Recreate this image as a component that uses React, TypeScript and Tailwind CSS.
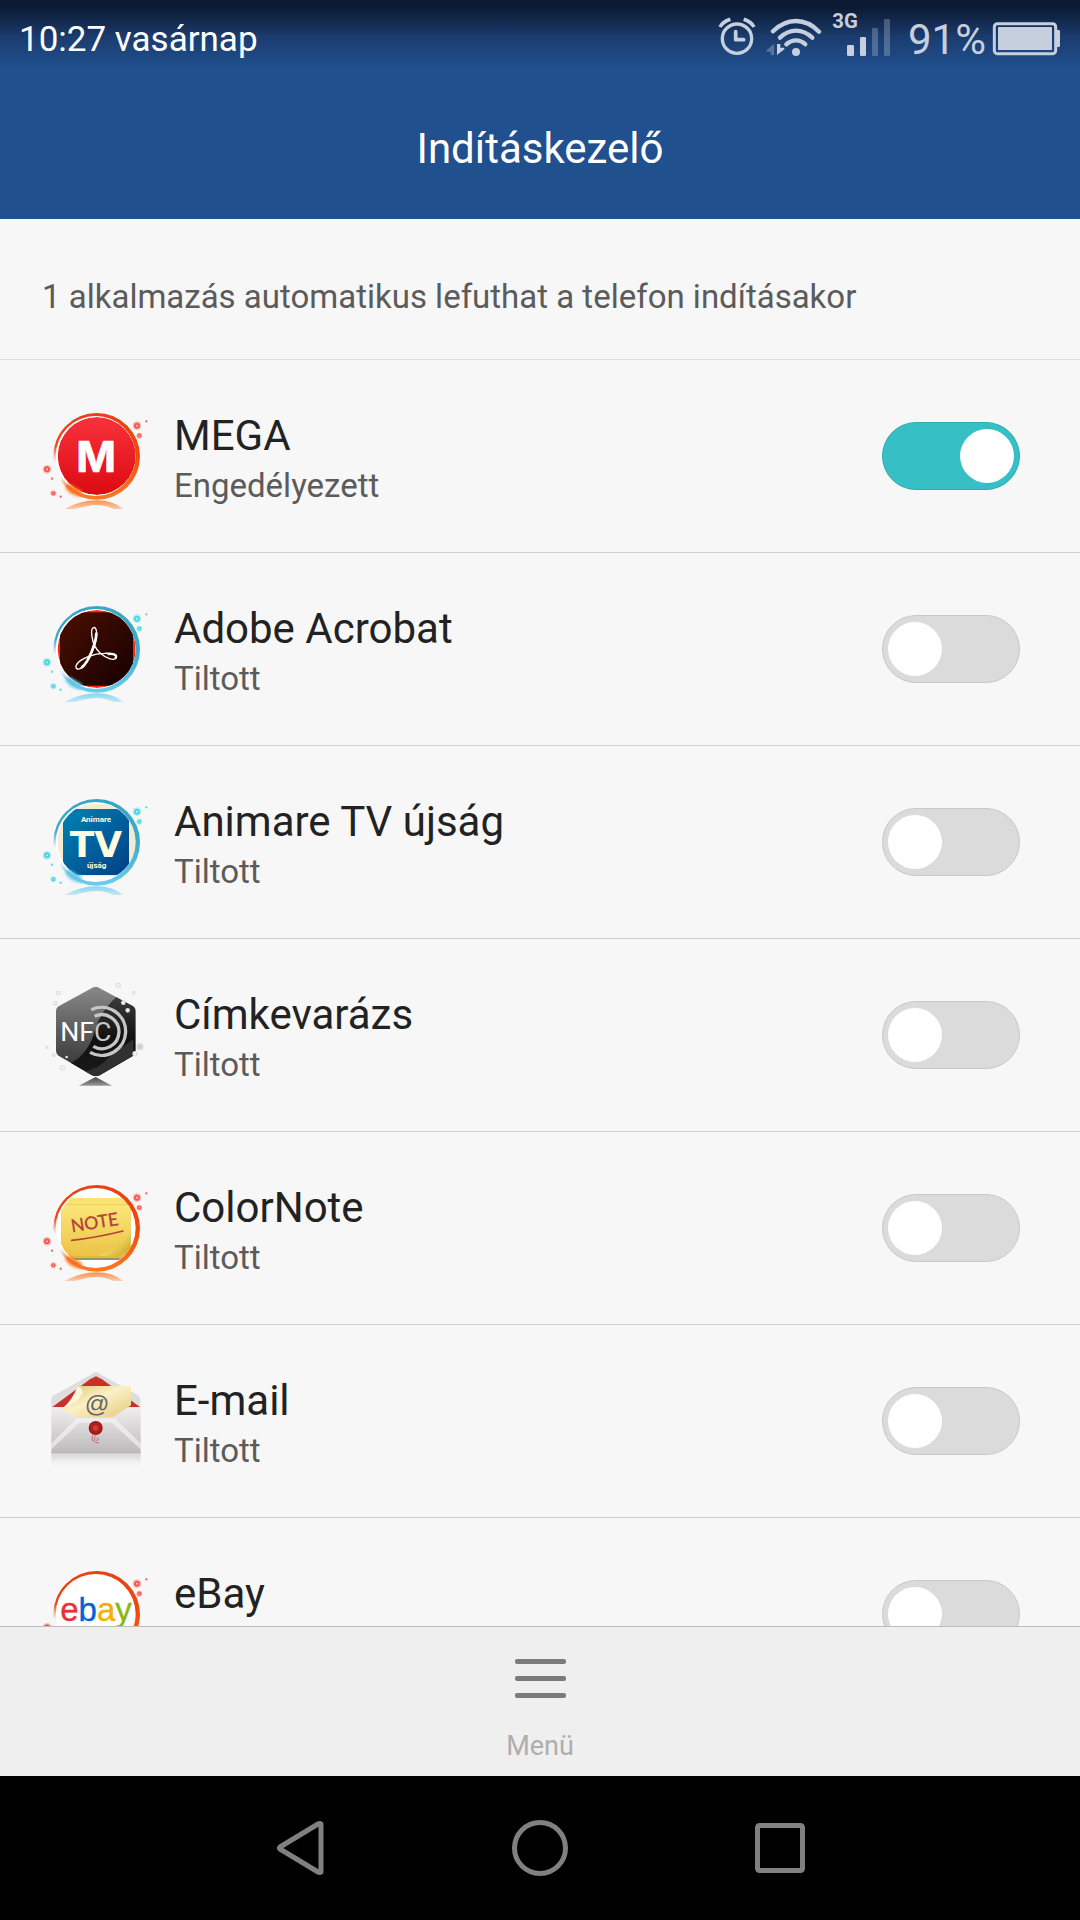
import React, { useState } from 'react';
import { clsx } from 'clsx';

interface AppEntry {
  id: string;
  name: string;
  icon: React.ElementType;
  allowed: boolean;
}

/* ---------- status bar icons ---------- */

const AlarmIcon = () => (
  <svg viewBox="54 30 114 144" className="h-[48px] w-[38px]" fill="none" stroke="currentColor" aria-hidden="true">
    <circle cx="111" cy="116" r="44" strokeWidth="10" />
    <path d="M107 95v24h24" strokeWidth="11" strokeLinecap="round" strokeLinejoin="round" />
    <path d="M60 81Q68 66 91 58" strokeWidth="11" />
    <path d="M162 81Q154 66 131 58" strokeWidth="11" />
  </svg>
);

const WifiIcon = () => (
  <svg viewBox="201 30 168 144" className="h-[48px] w-[56px]" fill="none" stroke="currentColor" aria-hidden="true">
    <g strokeWidth="13" strokeLinecap="round">
      <path d="M222 94Q253 63 291 63T360 95" />
      <path d="M243 113Q265 92 291 92T340 113" />
      <path d="M262 133Q275 121 291 121T319 133" />
    </g>
    <circle cx="291" cy="156" r="12" fill="currentColor" stroke="none" />
    <path d="M225 132v33h-10v-10h-12v-5z" fill="currentColor" stroke="none" opacity=".35" />
    <path d="M234 165v-33h10v11h12v5z" fill="currentColor" stroke="none" />
  </svg>
);

const SignalIcon = () => (
  <svg viewBox="396 30 177 144" className="h-[48px] w-[59px]" fill="currentColor" aria-hidden="true">
    <text x="397" y="84" fontFamily="Roboto, sans-serif" fontSize="61" fontWeight="700">3G</text>
    <rect x="441" y="135" width="21" height="33" rx="4" />
    <rect x="480" y="111" width="18" height="57" rx="4" />
    <rect x="516" y="84" width="18" height="84" rx="4" opacity=".3" />
    <rect x="552" y="57" width="18" height="111" rx="4" opacity=".3" />
  </svg>
);

const BatteryIcon = () => (
  <svg viewBox="876 30 207 144" className="h-[48px] w-[69px]" aria-hidden="true">
    <rect x="883" y="71" width="184" height="90" rx="9" fill="none" stroke="currentColor" strokeWidth="9" />
    <rect x="894" y="81" width="162" height="69" fill="currentColor" />
    <path d="M1071 90h5q4 0 4 4v43q0 4-4 4h-5z" fill="currentColor" />
  </svg>
);

/* ---------- app icons ---------- */

interface BubbleProps {
  id: string;
  tone: 'fire' | 'ice';
  children: React.ReactNode;
}

const tones = {
  fire: { top: '#e8401a', side: '#f04a0a', bottom: '#fb7a25', dot: '#f5413a', core: '#fde6dc' },
  ice: { top: '#36a6c6', side: '#3fa9cc', bottom: '#6ccdec', dot: '#35cfe6', core: '#e2fbff' },
};

const sparks = [
  [321, 77, 13],
  [328, 107, 9],
  [349, 64, 4],
  [51, 208, 13],
  [66, 236, 4],
  [70, 280, 9],
  [92, 290, 4],
];

const Bubble: React.FC<BubbleProps> = ({ id, tone, children }) => {
  const c = tones[tone];
  return (
    <svg viewBox="0 0 390 336" className="h-[112px] w-[130px] shrink-0" aria-hidden="true">
      <defs>
        <linearGradient id={`${id}-ring`} x1="0" y1="0" x2="0" y2="1">
          <stop offset="0" stopColor={c.top} />
          <stop offset=".5" stopColor={c.side} />
          <stop offset="1" stopColor={c.bottom} />
        </linearGradient>
        <radialGradient id={`${id}-fade`} gradientUnits="userSpaceOnUse" cx="62" cy="216" r="95">
          <stop offset=".35" stopColor="#000" />
          <stop offset=".85" stopColor="#fff" />
        </radialGradient>
        <mask id={`${id}-mask`} maskUnits="userSpaceOnUse" x="0" y="0" width="390" height="336">
          <rect width="390" height="336" fill={`url(#${id}-fade)`} />
        </mask>
        <clipPath id={`${id}-clip`}>
          <circle cx="200" cy="168" r="117" />
        </clipPath>
        <filter id={`${id}-blur`} x="-50%" y="-50%" width="200%" height="200%">
          <feGaussianBlur stdDeviation="4" />
        </filter>
        <linearGradient id={`${id}-mirror`} x1="0" y1="0" x2="0" y2="1">
          <stop offset="0" stopColor={c.bottom} stopOpacity=".8" />
          <stop offset="1" stopColor={c.bottom} stopOpacity=".35" />
        </linearGradient>
      </defs>
      <circle cx="200" cy="168" r="122" fill="#fff" />
      <g clipPath={`url(#${id}-clip)`}>{children}</g>
      <path d="M106 262Q108 248 124 255L156 274L154 290Q120 288 106 262" fill={c.bottom} filter={`url(#${id}-blur)`} />
      <path
        fillRule="evenodd"
        fill={`url(#${id}-ring)`}
        mask={`url(#${id}-mask)`}
        d="M70 169a130 130 0 1 0 260 0a130 130 0 1 0-260 0zM77 168a120 120 0 1 0 240 0a120 120 0 1 0-240 0z"
      />
      <path d="M104 327Q150 301 200 301T279 327H250Q225 315 200 315T134 327z" fill={`url(#${id}-mirror)`} />
      {sparks.map(([x, y, r]) => (
        <g key={`${x}-${y}`}>
          <circle cx={x} cy={y} r={r} fill={c.dot} opacity=".3" />
          <circle cx={x} cy={y} r={r * 0.7} fill={c.dot} opacity=".8" />
          {r > 5 && <circle cx={x} cy={y} r={r * 0.2} fill={c.core} />}
        </g>
      ))}
    </svg>
  );
};

const MegaIcon = () => (
  <Bubble id="mega" tone="fire">
    <defs>
      <linearGradient id="mega-bg" x1="0" y1="0" x2="0" y2="1">
        <stop offset="0" stopColor="#f8323c" />
        <stop offset="1" stopColor="#dc0a10" />
      </linearGradient>
    </defs>
    <circle cx="200" cy="168" r="117" fill="url(#mega-bg)" />
    <text x="198" y="216" textAnchor="middle" fill="#fff" fontFamily="Inter, sans-serif" fontSize="128" fontWeight="700" stroke="#fff" strokeWidth="2">M</text>
  </Bubble>
);

const AcrobatIcon = () => (
  <Bubble id="acrobat" tone="ice">
    <defs>
      <linearGradient id="acrobat-bg" x1="0" y1="0" x2="1" y2="1">
        <stop offset="0" stopColor="#4a0f02" />
        <stop offset="1" stopColor="#170000" />
      </linearGradient>
    </defs>
    <circle cx="200" cy="168" r="117" fill="#fa2a0a" />
    <rect x="90" y="58" width="219" height="220" fill="url(#acrobat-bg)" />
    <g fill="none" stroke="#fff" strokeLinecap="round" strokeLinejoin="round">
      <path d="M186 131C180 97 200 96 200 120C201 150 176 208 157 223C143 234 132 226 141 213C152 197 192 181 223 181C247 180 262 184 259 194C254 204 230 198 211 181C197 168 188 148 186 131" strokeWidth="4" />
      <path d="M199 122C198 151 176 206 156 223" strokeWidth="8" />
      <path d="M236 183C252 182 262 186 257 194" strokeWidth="7" />
    </g>
  </Bubble>
);

const AnimareIcon = () => (
  <Bubble id="animare" tone="ice">
    <defs>
      <linearGradient id="animare-bg" x1="0" y1="0" x2="1" y2="1">
        <stop offset="0" stopColor="#0083b4" />
        <stop offset="1" stopColor="#003f86" />
      </linearGradient>
    </defs>
    <rect x="82" y="55" width="236" height="216" fill="#f3ecd2" />
    <rect x="99" y="69" width="198" height="198" rx="18" fill="url(#animare-bg)" />
    <g fill="#fffde0" textAnchor="middle" fontWeight="700">
      <text x="198" y="108" fontFamily="Roboto, sans-serif" fontSize="24">Animare</text>
      <text x="198" y="212" fontFamily="'DejaVu Sans', sans-serif" fontSize="108">TV</text>
      <text x="200" y="246" fontFamily="Roboto, sans-serif" fontSize="24">újság</text>
    </g>
  </Bubble>
);

const NfcIcon = () => (
  <svg viewBox="0 9 390 336" className="h-[112px] w-[130px] shrink-0" aria-hidden="true">
    <defs>
      <linearGradient id="nfc-light" x1="0" y1="0" x2="0" y2="1">
        <stop offset="0" stopColor="#8d8d8d" />
        <stop offset="1" stopColor="#2b2b2b" />
      </linearGradient>
      <linearGradient id="nfc-dark" x1="0" y1="0" x2="0" y2="1">
        <stop offset="0" stopColor="#3c3c3c" />
        <stop offset=".5" stopColor="#111" />
        <stop offset="1" stopColor="#1a1a1a" />
      </linearGradient>
      <linearGradient id="nfc-mirror" x1="0" y1="0" x2="0" y2="1">
        <stop offset="0" stopColor="#444" />
        <stop offset="1" stopColor="#999" />
      </linearGradient>
      <clipPath id="nfc-clip">
        <path d="M186 36Q197 29 208 36L308 90Q317 95 317 106V222Q317 234 308 240L210 297Q197 304 185 297L87 240Q78 234 78 222V106Q78 95 87 90z" />
      </clipPath>
    </defs>
    <g clipPath="url(#nfc-clip)">
      <rect x="70" y="20" width="260" height="290" fill="url(#nfc-light)" />
      <path d="M262 60L330 90V310H120V262Q176 236 196 160Q210 108 262 60" fill="url(#nfc-dark)" />
      <path d="M240 240L310 190V250L200 305L150 290Q210 280 240 240" fill="#303030" />
    </g>
    <g fill="none" stroke="#c6c6c6" strokeWidth="10">
      <path d="M184 101A72 72 0 1 1 180 229" />
      <path d="M194 121A51 51 0 1 1 190 211" />
    </g>
    <text x="91" y="195" fill="#fff" fontFamily="Roboto, sans-serif" fontSize="80" fontWeight="400">
      NF<tspan fill="#c6c6c6">C</tspan>
    </text>
    <path d="M197 303L246 329H146z" fill="url(#nfc-mirror)" />
    <g fill="#fafafa" stroke="#dedede" strokeWidth="4">
      <circle cx="85" cy="51" r="5" />
      <circle cx="76" cy="82" r="5" />
      <circle cx="265" cy="28" r="6" />
      <circle cx="311" cy="50" r="4" />
      <circle cx="280" cy="80" r="5" />
      <circle cx="293" cy="103" r="5" />
      <circle cx="330" cy="212" r="9" fill="#cfcfcf" />
      <circle cx="315" cy="233" r="6" />
      <circle cx="71" cy="238" r="4" />
      <circle cx="97" cy="275" r="6" />
      <circle cx="51" cy="214" r="3" />
      <circle cx="110" cy="243" r="2" />
    </g>
  </svg>
);

const NoteIcon = () => (
  <Bubble id="note" tone="fire">
    <defs>
      <linearGradient id="note-bg" x1="0" y1="0" x2="0" y2="1">
        <stop offset="0" stopColor="#fdec80" />
        <stop offset="1" stopColor="#ecc246" />
      </linearGradient>
      <linearGradient id="note-curl" x1="0" y1="0" x2="1" y2="1">
        <stop offset=".3" stopColor="#fdf27c" />
        <stop offset="1" stopColor="#c9a020" />
      </linearGradient>
    </defs>
    <circle cx="200" cy="168" r="117" fill="#fff" />
    <rect x="97" y="252" width="205" height="12" fill="#9b9466" />
    <rect x="94" y="78" width="208" height="180" fill="#e3b93a" />
    <path d="M94 78H302V186Q288 248 210 252H94z" fill="url(#note-bg)" />
    <rect x="94" y="78" width="208" height="19" fill="#fbe271" />
    <path d="M94 98H302" stroke="#e6c14c" strokeWidth="2" />
    <path d="M302 168Q290 222 202 250Q260 262 302 232z" fill="url(#note-curl)" />
    <text x="126" y="181" transform="rotate(-9 126 181)" fill="#b0433a" fontFamily="Lato, sans-serif" fontSize="53" fontWeight="400" stroke="#b0433a" strokeWidth="1">NOTE</text>
    <path d="M125 205Q200 197 279 177" fill="none" stroke="#b0433a" strokeWidth="5" strokeLinecap="round" />
  </Bubble>
);

const MailIcon = () => (
  <svg viewBox="0 15 390 336" className="h-[112px] w-[130px] shrink-0" aria-hidden="true">
    <defs>
      <linearGradient id="mail-body" x1="0" y1="0" x2="0" y2="1">
        <stop offset="0" stopColor="#f0eef0" />
        <stop offset="1" stopColor="#bdb9ba" />
      </linearGradient>
      <linearGradient id="mail-card" x1="0" y1="0" x2="1" y2="1">
        <stop offset="0" stopColor="#e2bf62" />
        <stop offset=".45" stopColor="#fbf1c8" />
        <stop offset="1" stopColor="#e6c878" />
      </linearGradient>
      <radialGradient id="mail-seal">
        <stop offset="0" stopColor="#e0453c" />
        <stop offset="1" stopColor="#96100f" />
      </radialGradient>
      <linearGradient id="mail-mirror" x1="0" y1="0" x2="0" y2="1">
        <stop offset="0" stopColor="#d8d7d8" />
        <stop offset=".5" stopColor="#f0f0f0" />
        <stop offset="1" stopColor="#f7f7f7" />
      </linearGradient>
    </defs>
    <path d="M64 142V116Q64 110 72 106L198 35L322 104Q331 110 331 118V142z" fill="#dedcdf" />
    <path d="M66 142L180 58L198 49L216 58L331 142z" fill="#c73228" />
    <path d="M64 142H332V281H64z" fill="url(#mail-body)" />
    <path d="M64 250L140 175H254L332 250V268L246 188H148L64 268z" fill="#f8f7f8" opacity=".6" />
    <path d="M143 78H303V136L248 172H140L95 148Q132 128 143 78" fill="url(#mail-card)" />
    <path d="M143 78Q160 86 158 100Q142 130 95 148Q128 120 143 78" fill="#fdf6dc" />
    <text x="201" y="155" textAnchor="middle" fill="#666" fontFamily="'Liberation Sans', sans-serif" fontSize="73">@</text>
    <path d="M189 224Q183 238 190 244M199 226Q186 236 197 240Q208 244 203 232M189 240Q196 252 207 248" fill="none" stroke="#c56a72" strokeWidth="3" />
    <circle cx="197" cy="204" r="21" fill="url(#mail-seal)" />
    <circle cx="197" cy="204" r="12" fill="none" stroke="#a51a18" strokeWidth="3" />
    <rect x="64" y="283" width="268" height="40" fill="url(#mail-mirror)" />
  </svg>
);

const EbayIcon = () => (
  <Bubble id="ebay" tone="fire">
    <circle cx="200" cy="168" r="117" fill="#fff" />
    <text x="198" y="190" textAnchor="middle" fontFamily="'Liberation Sans', sans-serif" fontSize="99" strokeWidth="1">
      <tspan fill="#e53238" stroke="#e53238">e</tspan>
      <tspan fill="#0064d2" stroke="#0064d2">b</tspan>
      <tspan fill="#f5af02" stroke="#f5af02">a</tspan>
      <tspan fill="#86b817" stroke="#86b817">y</tspan>
    </text>
  </Bubble>
);

const entries: AppEntry[] = [
  { id: 'mega', name: 'MEGA', icon: MegaIcon, allowed: true },
  { id: 'acrobat', name: 'Adobe Acrobat', icon: AcrobatIcon, allowed: false },
  { id: 'animare', name: 'Animare TV újság', icon: AnimareIcon, allowed: false },
  { id: 'nfc', name: 'Címkevarázs', icon: NfcIcon, allowed: false },
  { id: 'colornote', name: 'ColorNote', icon: NoteIcon, allowed: false },
  { id: 'email', name: 'E-mail', icon: MailIcon, allowed: false },
  { id: 'ebay', name: 'eBay', icon: EbayIcon, allowed: false },
];

/* ---------- page parts ---------- */

const StatusBar = () => (
  <div className="flex h-[76px] items-start justify-between bg-linear-to-b from-[#0c1b33] from-10% via-[#1b3d70] via-50% to-[#20508e] to-90% pr-[19px] pl-[19px]">
    <span className="pt-[17px] text-[35px] leading-[46px] text-white">10:27 vasárnap</span>
    <div className="flex items-start gap-[10px] pt-[10px] text-[#c6cfde]">
      <AlarmIcon />
      <WifiIcon />
      <SignalIcon />
      <div className="flex items-start gap-[6px] pl-[7px]">
        <span className="pt-[6px] text-[42px] leading-[48px]">91%</span>
        <BatteryIcon />
      </div>
    </div>
  </div>
);

interface EntryRowProps {
  entry: AppEntry;
  allowed: boolean;
  onToggle: (id: string) => void;
}

const EntryRow: React.FC<EntryRowProps> = ({ entry, allowed, onToggle }) => (
  <li className="border-b border-[#cfcfcf]">
    <label className="flex h-[192px] items-center pr-[60px] pl-[30px]">
      <entry.icon />
      <span className="flex flex-1 flex-col gap-1 pt-[6px] pl-[14px]">
        <span className="text-[42px] leading-[50px] text-[#222]">{entry.name}</span>
        <span className="text-[33px] leading-[42px] text-[#5b5b5b]">{allowed ? 'Engedélyezett' : 'Tiltott'}</span>
      </span>
      <input
        type="checkbox"
        role="switch"
        checked={allowed}
        onChange={() => onToggle(entry.id)}
        className={clsx(
          'flex h-[68px] w-[138px] shrink-0 appearance-none items-center rounded-full border px-[5px]',
          'before:size-[54px] before:rounded-full before:bg-white',
          allowed ? 'justify-end border-[#2fabb1] bg-[#36c0c6]' : 'justify-start border-[#c8c8c8] bg-[#dbdbdb]'
        )}
      />
    </label>
  </li>
);

const MenuBar = () => (
  <div className="flex h-[150px] shrink-0 justify-center border-t border-[#bdbdbd] bg-[#efefef]">
    <button type="button" className="flex flex-col items-center pt-[32px]">
      <svg viewBox="0 0 51 39" className="h-[39px] w-[51px]" fill="#7b7b7b" aria-hidden="true">
        <rect width="51" height="5" rx="2" />
        <rect y="17" width="51" height="5" rx="2" />
        <rect y="34" width="51" height="5" rx="2" />
      </svg>
      <span className="pt-[30px] text-[27px] leading-[36px] text-[#aeaeae]">Menü</span>
    </button>
  </div>
);

const NavBar = () => (
  <nav className="flex h-[144px] shrink-0 justify-center bg-black text-[#808080]">
    <button type="button" aria-label="Vissza" className="flex w-[240px] items-center justify-center">
      <svg viewBox="0 0 48 56" className="h-[56px] w-[48px]" fill="none" stroke="currentColor" strokeWidth="5" strokeLinejoin="round" aria-hidden="true">
        <path d="M45 4Q44 3 42 4L4 27Q3 28 4 29L42 52Q44 53 45 52z" />
      </svg>
    </button>
    <button type="button" aria-label="Kezdőlap" className="flex w-[240px] items-center justify-center">
      <svg viewBox="0 0 112 112" className="size-[56px]" fill="none" stroke="currentColor" strokeWidth="10" aria-hidden="true">
        <circle cx="56" cy="56" r="51" />
      </svg>
    </button>
    <button type="button" aria-label="Legutóbbiak" className="flex w-[240px] items-center justify-center">
      <svg viewBox="0 0 100 100" className="size-[50px]" fill="none" stroke="currentColor" strokeWidth="10" aria-hidden="true">
        <rect x="5" y="5" width="90" height="90" rx="4" />
      </svg>
    </button>
  </nav>
);

const App: React.FC = () => {
  const [allowedIds, setAllowedIds] = useState<string[]>(entries.filter(e => e.allowed).map(e => e.id));

  const toggle = (id: string) => {
    setAllowedIds(ids => (ids.includes(id) ? ids.filter(x => x !== id) : [...ids, id]));
  };

  return (
    <div className="flex h-screen flex-col bg-[#f7f7f7] font-[Roboto,sans-serif]">
      <header className="shrink-0 bg-[#20508e]">
        <StatusBar />
        <h1 className="pt-[47px] pb-[44px] text-center text-[42px] leading-[52px] text-white">Indításkezelő</h1>
      </header>
      <main className="min-h-0 flex-1 overflow-y-auto [scrollbar-width:none]">
        <p className="border-b border-[#dedede] px-[42px] pt-[57px] pb-[41px] text-[33px] leading-[42px] text-[#5b5b5b]">
          {allowedIds.length} alkalmazás automatikus lefuthat a telefon indításakor
        </p>
        <ul>
          {entries.map(entry => (
            <EntryRow key={entry.id} entry={entry} allowed={allowedIds.includes(entry.id)} onToggle={toggle} />
          ))}
        </ul>
      </main>
      <MenuBar />
      <NavBar />
    </div>
  );
};

export default App;
